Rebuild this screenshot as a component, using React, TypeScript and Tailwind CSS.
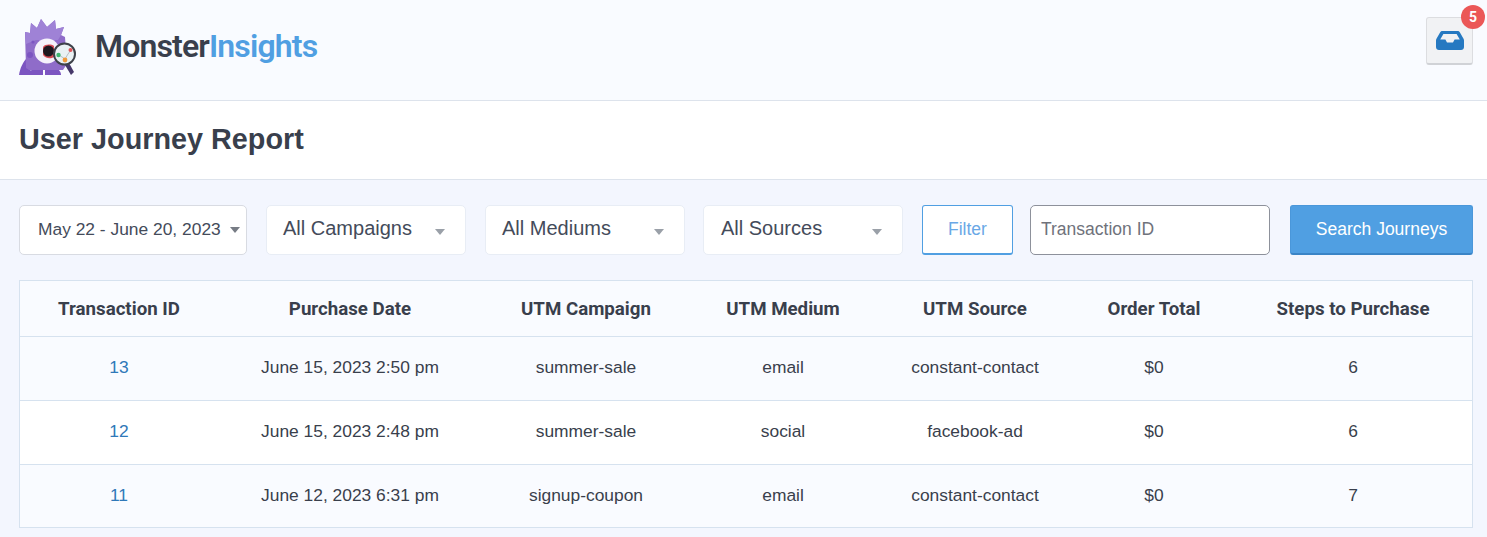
const rows = [
	{ id: "13", date: "June 15, 2023 2:50 pm", campaign: "summer-sale", medium: "email", source: "constant-contact", total: "$0", steps: "6" },
	{ id: "12", date: "June 15, 2023 2:48 pm", campaign: "summer-sale", medium: "social", source: "facebook-ad", total: "$0", steps: "6" },
	{ id: "11", date: "June 12, 2023 6:31 pm", campaign: "signup-coupon", medium: "email", source: "constant-contact", total: "$0", steps: "7" },
]

const headers = ["Transaction ID", "Purchase Date", "UTM Campaign", "UTM Medium", "UTM Source", "Order Total", "Steps to Purchase"]

const gridCols = "grid grid-cols-[198px_264px_208px_186px_198px_160px_238px] items-center text-center"

function Logo() {
	return (
		<svg width="60" height="58" viewBox="0 0 60 58" className="shrink-0">
			{/* feet and tail */}
			<path d="M1 57 C2 50 5 44 9 40 L14 57 Z" fill="#7c55c1" />
			<path d="M11 57 C11 53 14 51 18 51 H25 V57 Z" fill="#7c55c1" />
			<path d="M27 57 V51 H38 C41 51 43 54 43 57 Z" fill="#7c55c1" />
			{/* body and spikes */}
			<path d="M8 50 L7 14 L12 15 L13 5 L19 10 L23 1 L29 9 L37 2 L38 11 L46 9 L43 17 L47 19 L49 46 L45 52 H11 Z" fill="#8f6cc9" />
			<path d="M7 14 L12 15 L13 5 L19 10 L23 1 L29 9 L37 2 L38 11 L46 9 L43 17 L40 22 L18 22 L8 26 Z" fill="#9f82d6" />
			<circle cx="12" cy="37" r="3" fill="#7c55c1" />
			<circle cx="15" cy="24" r="1.6" fill="#7c55c1" />
			{/* eye */}
			<circle cx="29" cy="33" r="12.5" fill="#f5f2fb" />
			<path d="M25 29 C27 26 33 26 36 28 L36 39 C33 41 28 41 25 37 Z" fill="#d94c55" />
			<circle cx="30.5" cy="33" r="5.5" fill="#1d1820" />
			{/* magnifier */}
			<path d="M51 45 L56 54 L53 57 L47 47 Z" fill="#46386a" />
			<circle cx="46.5" cy="36" r="10.5" fill="#e9f1f4" stroke="#3e424a" strokeWidth="2" />
			<path d="M41 37 L47 41 L50 36 L53 32" fill="none" stroke="#b5c0c6" strokeWidth="1" />
			<circle cx="40.5" cy="37" r="2.2" fill="#3fb66f" />
			<circle cx="47" cy="42" r="2.4" fill="#f19a3e" />
			<circle cx="52.5" cy="32" r="2" fill="#e0555a" />
		</svg>
	)
}

function Inbox() {
	return (
		<svg width="28" height="19" viewBox="0 0 28 19" className="block">
			<path
				fillRule="evenodd"
				d="M6.5 0 H21.5 C22.5 0 23.3 0.5 23.8 1.3 L27.4 7.6 C27.8 8.2 28 8.9 28 9.6 V16 C28 17.7 26.7 19 25 19 H3 C1.3 19 0 17.7 0 16 V9.6 C0 8.9 0.2 8.2 0.6 7.6 L4.2 1.3 C4.7 0.5 5.5 0 6.5 0 Z M7.4 3 L4.2 8.6 H9.4 L11 11.4 H17 L18.6 8.6 H23.8 L20.6 3 Z"
				fill="#2679c1"
			/>
		</svg>
	)
}

function Caret({ className }: { className: string }) {
	return <span className={`h-0 w-0 border-x-[5px] border-t-[6px] border-x-transparent ${className}`} />
}

function Select({ label, className = "" }: { label: string; className?: string }) {
	return (
		<div className={`flex h-[50px] w-[200px] items-center justify-between rounded-[5px] border border-[#e8edf5] bg-white pr-[20px] ${className}`}>
			<span className="-mt-[5px] text-[20px] leading-none text-[#444b5a]">{label}</span>
			<Caret className="mt-1 border-t-[#9aa0a8]" />
		</div>
	)
}

export default function App() {
	return (
		<div className="h-[537px] w-[1487px] overflow-hidden bg-[#f3f6fe] font-['Liberation_Sans',sans-serif] text-[#393f4c]">
			{/* header */}
			<header className="flex h-[101px] items-start justify-between border-b border-[#dde3ec] bg-[#f9fbff] pl-[18px] pr-[14px]">
				<div className="flex items-center pt-[18px]">
					<Logo />
					<span className="ml-[17px] -mt-[3px] font-['Roboto',sans-serif] text-[32px] font-semibold leading-none tracking-[-0.85px] text-[#393f4c]">
						Monster<span className="text-[#509fe2]">Insights</span>
					</span>
				</div>
				<div className="relative mt-[17px]">
					<button className="flex h-[48px] w-[47px] items-center justify-center rounded-[3px] border border-[#dcdde0] border-b-2 border-b-[#d0d2d6] bg-[#f1f2f4]">
						<Inbox />
					</button>
					<span className="absolute -right-[12px] -top-[12px] flex h-[24px] w-[24px] items-center justify-center rounded-full bg-[#eb5757] font-['Roboto',sans-serif] text-[14px] font-bold text-white">
						5
					</span>
				</div>
			</header>

			{/* title */}
			<div className="flex h-[79px] items-center border-b border-[#dde3ec] bg-white pb-[2px] pl-[19px]">
				<h1 className="text-[28.8px] font-bold leading-none text-[#393f4c]">User Journey Report</h1>
			</div>

			<main className="px-[19px] pr-[14px]">
				{/* filters */}
				<div className="mt-[25px] flex items-stretch">
					<div className="flex h-[50px] w-[228px] items-center justify-between rounded-[5px] border border-[#d8dbe2] bg-white pl-[18px] pr-[6px]">
						<span className="text-[17.4px] leading-none text-[#444b5a]">May 22 - June 20, 2023</span>
						<Caret className="border-t-[#777c85]" />
					</div>
					<div className="ml-[19px] flex">
						<Select label="All Campaigns" className="pl-[16px]" />
						<Select label="All Mediums" className="ml-[19px] pl-[16px]" />
						<Select label="All Sources" className="ml-[18px] pl-[17px]" />
					</div>
					<button className="ml-[19px] h-[50px] w-[91px] rounded-[3px] border border-[#509fe2] border-b-2 bg-white text-[17.5px] text-[#6aa8e6]">
						Filter
					</button>
					<div className="ml-[17px] flex h-[50px] w-[240px] items-center rounded-[5px] border border-[#8d919b] bg-white pl-[10px]">
						<span className="text-[17.5px] leading-none text-[#6f727b]">Transaction ID</span>
					</div>
					<button className="ml-[20px] h-[50px] w-[183px] rounded-[3px] border border-[#4a97da] border-b-2 border-b-[#3a84c6] bg-[#509fe2] text-[17.5px] text-white">
						Search Journeys
					</button>
				</div>

				{/* table */}
				<div className="mt-[25px] w-[1454px] border border-[#d6e2ef] bg-[#f9fbff]">
					<div className={`${gridCols} h-[56px] border-b border-[#d6e2ef] pt-[2px] font-['Roboto',sans-serif] text-[18.7px] font-bold`}>
						{headers.map((h) => (
							<div key={h}>{h}</div>
						))}
					</div>
					{rows.map((r, i) => (
						<div
							key={r.id}
							className={`${gridCols} pb-[2px] text-[17.4px] ${i === 1 ? "bg-white" : "bg-[#f9fbff]"} ${i < 2 ? "h-[64px] border-b border-[#d6e2ef]" : "h-[62px]"}`}
						>
							<div className="text-[#2f78b8]">{r.id}</div>
							<div>{r.date}</div>
							<div>{r.campaign}</div>
							<div>{r.medium}</div>
							<div>{r.source}</div>
							<div>{r.total}</div>
							<div>{r.steps}</div>
						</div>
					))}
				</div>
			</main>
		</div>
	)
}
